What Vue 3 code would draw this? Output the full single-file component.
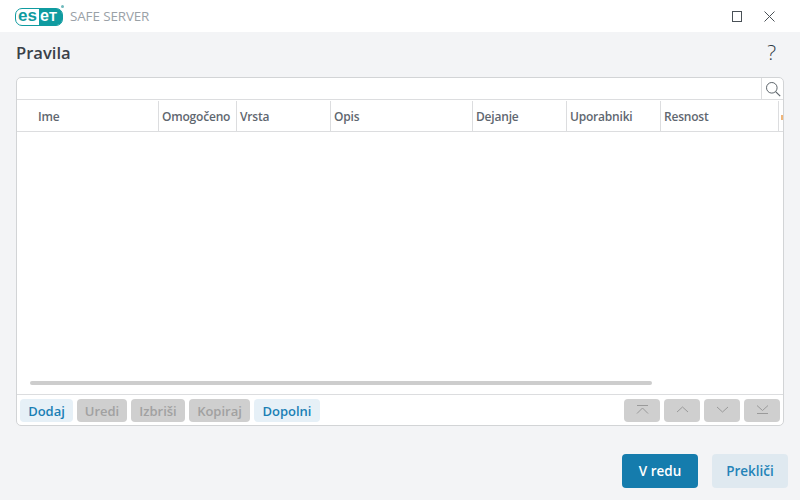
<script setup>
const columns = [
  { name: 'Ime', width: 142, pad: 21 },
  { name: 'Omogočeno', width: 78 },
  { name: 'Vrsta', width: 94 },
  { name: 'Opis', width: 142 },
  { name: 'Dejanje', width: 94 },
  { name: 'Uporabniki', width: 94 },
  { name: 'Resnost', width: 118 },
]
const actions = [
  { label: 'Dodaj', width: 53, on: true },
  { label: 'Uredi', width: 50 },
  { label: 'Izbriši', width: 54 },
  { label: 'Kopiraj', width: 61 },
  { label: 'Dopolni', width: 66, on: true },
]
const moves = [
  'M1 1.5h11M1 9.5l5.5-5.5 5.5 5.5',
  'M1 8l5.5-5 5.5 5',
  'M1 3l5.5 5 5.5-5',
  'M1 1.5l5.5 5 5.5-5M1 9.5h11',
]
</script>

<template>
  <div class="window">
    <header class="titlebar">
      <div class="brand">
        <div class="logo">
          <span class="logo-es">es</span><span class="logo-et">e<b>T</b></span>
          <i class="reg"></i>
        </div>
        <span class="product">SAFE SERVER</span>
      </div>
      <div class="controls">
        <svg width="13" height="13" viewBox="0 0 13 13"><rect x="1.5" y="1.5" width="9" height="10" fill="none" stroke="#4a5157" stroke-width="1"/></svg>
        <svg width="13" height="13" viewBox="0 0 13 13"><path d="M1.5 1.5l10 10M11.5 1.5l-10 10" fill="none" stroke="#4a5157" stroke-width="1"/></svg>
      </div>
    </header>

    <main class="content">
      <div class="heading">
        <h1>Pravila</h1>
        <span class="help">?</span>
      </div>

      <section class="panel">
        <div class="search">
          <div class="search-input"></div>
          <div class="search-btn">
            <svg width="16" height="16" viewBox="0 0 16 16"><circle cx="6.8" cy="6.8" r="5.3" fill="none" stroke="#5e666c" stroke-width="1"/><path d="M10.6 10.6l4.6 4.6" stroke="#5e666c" stroke-width="1.2"/></svg>
          </div>
        </div>
        <div class="table-head">
          <div v-for="c in columns" :key="c.name" class="col" :style="{ width: c.width + 'px', paddingLeft: (c.pad || 3) + 'px' }">{{ c.name }}</div>
          <i class="clip"></i>
        </div>
        <div class="table-body">
          <div class="scrollbar"></div>
        </div>
        <div class="toolbar">
          <button v-for="a in actions" :key="a.label" class="act" :class="{ on: a.on }" :style="{ width: a.width + 'px' }">{{ a.label }}</button>
          <div class="moves">
            <button v-for="d in moves" :key="d" class="move">
              <svg width="13" height="13" viewBox="0 0 13 13"><path :d="d" fill="none" stroke="#9a9a9a" stroke-width="1"/></svg>
            </button>
          </div>
        </div>
      </section>

      <footer class="footer">
        <button class="btn primary">V redu</button>
        <button class="btn secondary">Prekliči</button>
      </footer>
    </main>
  </div>
</template>

<style>
html, body { margin: 0; background: #f3f4f6; }
</style>

<style scoped>
.window {
  width: 800px;
  height: 500px;
  display: flex;
  flex-direction: column;
  font-family: "Open Sans", "Noto Sans", sans-serif;
  overflow: hidden;
  background: #f3f4f6;
}
.titlebar {
  height: 32px;
  flex: none;
  background: #fff;
  display: flex;
  justify-content: space-between;
  align-items: center;
}
.brand { display: flex; align-items: center; margin-left: 15px; }
.logo {
  position: relative;
  width: 48px;
  height: 18px;
  margin-top: 1px;
  box-sizing: border-box;
  border: 1.5px solid #0f9ba0;
  border-radius: 7px;
  display: flex;
  font-family: "Liberation Sans", sans-serif;
  font-weight: 700;
}
.logo-es {
  width: 23px;
  flex: none;
  box-sizing: border-box;
  padding-left: 2px;
  font-size: 17px;
  line-height: 13px;
  color: #0f9ba0;
}
.logo-et {
  flex: 1;
  background: #0f9ba0;
  border-radius: 0 5px 5px 0;
  color: #fff;
  font-size: 16px;
  line-height: 13px;
  padding-left: 1px;
}
.logo-et b { font-size: 13px; }
.reg {
  position: absolute;
  right: -2px;
  top: -4px;
  width: 3px;
  height: 3px;
  border-radius: 50%;
  background: #6fb9bc;
}
.product {
  margin-left: 7px;
  font-size: 13.4px;
  color: #9aa1a7;
  letter-spacing: -0.1px;
}
.controls {
  display: flex;
  gap: 19px;
  margin-right: 24px;
}
.controls svg { display: block; }
.content {
  flex: 1;
  display: flex;
  flex-direction: column;
  padding: 0 16px;
  min-height: 0;
}
.heading {
  height: 45px;
  flex: none;
  display: flex;
  justify-content: space-between;
  align-items: center;
}
h1 {
  margin: 0 0 4px;
  font-size: 16.6px;
  font-weight: 600;
  color: #3a4148;
}
.help {
  font-family: "Open Sans", sans-serif;
  font-weight: 300;
  font-size: 21px;
  color: #2f3a44;
  margin: 0 8px 6px 0;
}
.panel {
  height: 349px;
  flex: none;
  box-sizing: border-box;
  background: #fff;
  border: 1px solid #d2d4d6;
  border-radius: 5px;
  display: flex;
  flex-direction: column;
  overflow: hidden;
}
.search {
  height: 22px;
  flex: none;
  box-sizing: border-box;
  display: flex;
  border-bottom: 1px solid #dcdddf;
}
.search-input { flex: 1; }
.search-btn {
  width: 21px;
  border-left: 1px solid #dcdddf;
  display: flex;
  align-items: center;
  justify-content: center;
}
.table-head {
  height: 32px;
  flex: none;
  box-sizing: border-box;
  display: flex;
  position: relative;
  border-bottom: 1px solid #dcdddf;
  overflow: hidden;
  font-size: 12px;
  font-weight: 600;
  letter-spacing: -0.2px;
  color: #5f6770;
}
.col {
  flex: none;
  box-sizing: border-box;
  display: flex;
  align-items: center;
  border-right: 1px solid #dcdddf;
  margin: 1px 0 0;
}
.clip {
  position: absolute;
  right: 0;
  top: 15px;
  width: 2px;
  height: 5px;
  background: #f0b67a;
}
.table-body {
  flex: 1;
  position: relative;
  min-height: 0;
}
.scrollbar {
  position: absolute;
  left: 13px;
  bottom: 9px;
  width: 622px;
  height: 4px;
  border-radius: 2px;
  background: #cdcdcd;
}
.toolbar {
  height: 31px;
  flex: none;
  box-sizing: border-box;
  border-top: 1px solid #dcdddf;
  display: flex;
  align-items: center;
  gap: 4px;
  padding: 1px 3px 0;
}
button {
  border: 0;
  padding: 0;
  font-family: inherit;
}
.act {
  height: 23px;
  border-radius: 4px;
  font-size: 13px;
  font-weight: 600;
  background: #cfcfcf;
  color: #a1a1a1;
}
.act.on {
  background: #e6f0f7;
  color: #1a7fb5;
}
.moves {
  margin-left: auto;
  display: flex;
  gap: 4px;
}
.move {
  width: 36px;
  height: 23px;
  border-radius: 4px;
  background: #cfcfcf;
  display: flex;
  align-items: center;
  justify-content: center;
}
.footer {
  display: flex;
  justify-content: flex-end;
  gap: 14px;
  margin: 28px -4px 0 0;
}
.btn {
  width: 76px;
  height: 34px;
  border-radius: 4px;
  font-size: 13.5px;
  font-weight: 600;
}
.primary { background: #157cad; color: #fff; }
.secondary { background: #dfe9f0; color: #2483b8; }
</style>
